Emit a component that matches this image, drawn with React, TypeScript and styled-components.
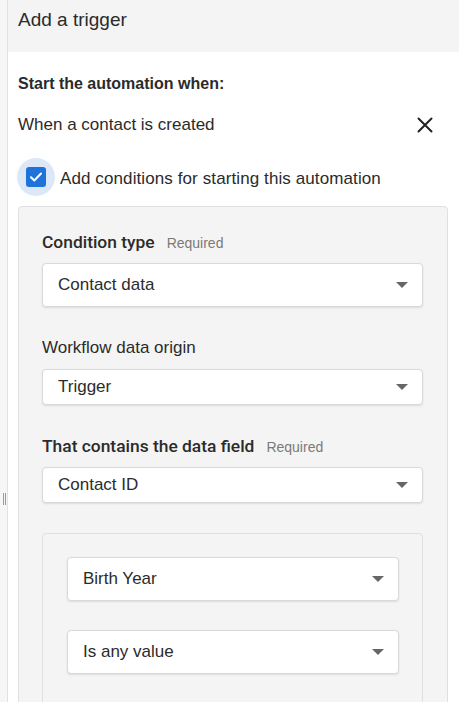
import React from 'react';
import styled, { createGlobalStyle } from 'styled-components';

const GlobalStyle = createGlobalStyle`
  *, *::before, *::after {
    box-sizing: border-box;
  }

  html, body {
    margin: 0;
    padding: 0;
    background: #ffffff;
  }

  body {
    font-family: "Liberation Sans", Arial, sans-serif;
    color: #2b2b2b;
    overflow: hidden;
  }
`;

const Page = styled.div`
  display: flex;
  height: 702px;
  overflow: hidden;
`;

const Splitter = styled.div`
  width: 8px;
  flex-shrink: 0;
  background: #f6f6f6;
  border-right: 1px solid #e2e2e2;
  padding: 493px 0 0 3px;
`;

const Grip = styled.div`
  width: 3px;
  height: 12px;
  border-left: 1px solid #9a9a9a;
  border-right: 1px solid #9a9a9a;
`;

const Panel = styled.div`
  flex: 1;
  min-width: 0;
  display: flex;
  flex-direction: column;
`;

const Header = styled.header`
  height: 52px;
  flex-shrink: 0;
  background: #f4f4f4;
  padding: 8px 10px 0;
  font-size: 19px;
  line-height: 24px;
  color: #2b2b2b;
`;

const Body = styled.div`
  display: flex;
  flex-direction: column;
  padding: 22px 11px 0 10px;
`;

const Heading = styled.div`
  font-size: 16px;
  font-weight: 700;
  line-height: 20px;
`;

const TriggerRow = styled.div`
  margin-top: 19px;
  height: 24px;
  display: flex;
  align-items: center;
  justify-content: space-between;
  font-size: 17px;
  line-height: 24px;
`;

const CloseButton = styled.button`
  width: 18px;
  height: 18px;
  margin-right: 14px;
  padding: 1px;
  border: none;
  background: none;
  cursor: pointer;
  display: flex;
  color: #222222;
`;

const CheckRow = styled.label`
  margin-top: 21px;
  margin-left: -1px;
  height: 38px;
  display: flex;
  align-items: center;
  gap: 5px;
  cursor: pointer;
`;

const Halo = styled.span`
  width: 38px;
  height: 38px;
  border-radius: 50%;
  background: #dce8f8;
  display: flex;
  align-items: center;
  justify-content: center;
`;

const CheckBox = styled.span`
  width: 20px;
  height: 20px;
  border-radius: 3px;
  background: #1f72d9;
  display: flex;
  align-items: center;
  justify-content: center;
`;

const CheckLabel = styled.span`
  font-size: 17px;
  line-height: 24px;
  letter-spacing: 0.1px;
  padding-top: 3px;
`;

const Card = styled.div<{ $nested?: boolean }>`
  margin-top: ${(p) => (p.$nested ? '30px' : '10px')};
  background: #f4f4f4;
  border: 1px solid #e0e0e0;
  border-radius: 4px;
  display: flex;
  flex-direction: column;
  padding: ${(p) => (p.$nested ? '23px 23px 40px 24px' : '25px 24px 40px 23px')};
  gap: ${(p) => (p.$nested ? '29px' : '0')};
`;

const Field = styled.div`
  display: flex;
  flex-direction: column;

  & + & {
    margin-top: 31px;
  }
`;

const LabelRow = styled.div`
  height: 20px;
  display: flex;
  align-items: baseline;
  line-height: 20px;
`;

const LabelText = styled.span<{ $strong?: boolean }>`
  font-family: ${(p) => (p.$strong ? 'Roboto, "Liberation Sans", sans-serif' : 'inherit')};
  font-size: ${(p) => (p.$strong ? '17.4px' : '17px')};
  font-weight: ${(p) => (p.$strong ? 500 : 400)};
  line-height: 20px;
  color: #2b2b2b;
`;

const Required = styled.span`
  margin-left: 12px;
  font-size: 14px;
  line-height: 20px;
  color: #7a7a7a;
`;

const Select = styled.div<{ $tall?: boolean; $spaced?: boolean }>`
  margin-top: ${(p) => (p.$spaced ? '11px' : '0')};
  height: ${(p) => (p.$tall ? '44px' : '36px')};
  background: #ffffff;
  border: 1px solid #d9d9d9;
  border-radius: 4px;
  box-shadow: 0 1px 2px rgba(0, 0, 0, 0.1);
  display: flex;
  align-items: center;
  justify-content: space-between;
  padding: 0 14px 0 15px;
  font-size: 17px;
  color: #2b2b2b;
  cursor: pointer;
`;

const Caret = styled.span`
  width: 0;
  height: 0;
  border-left: 6px solid transparent;
  border-right: 6px solid transparent;
  border-top: 6px solid #666666;
`;

const CloseIcon = () => (
  <svg width="16" height="16" viewBox="0 0 16 16" fill="none">
    <path d="M1.5 1.5 14.5 14.5M14.5 1.5 1.5 14.5" stroke="currentColor" strokeWidth="2" strokeLinecap="round" />
  </svg>
);

const CheckIcon = () => (
  <svg width="14" height="14" viewBox="0 0 14 14" fill="none">
    <path d="M2 7.3 5.3 10.5 12 3.5" stroke="#ffffff" strokeWidth="2" strokeLinecap="round" strokeLinejoin="round" />
  </svg>
);

interface DropdownProps {
  value: string;
  tall?: boolean;
  spaced?: boolean;
}

const Dropdown: React.FC<DropdownProps> = ({ value, tall, spaced }) => (
  <Select $tall={tall} $spaced={spaced}>
    <span>{value}</span>
    <Caret />
  </Select>
);

const App: React.FC = () => {
  return (
    <>
      <GlobalStyle />
      <Page>
        <Splitter>
          <Grip />
        </Splitter>
        <Panel>
          <Header>Add a trigger</Header>
          <Body>
            <Heading>Start the automation when:</Heading>
            <TriggerRow>
              <span>When a contact is created</span>
              <CloseButton type="button" aria-label="Remove trigger">
                <CloseIcon />
              </CloseButton>
            </TriggerRow>
            <CheckRow>
              <Halo>
                <CheckBox>
                  <CheckIcon />
                </CheckBox>
              </Halo>
              <CheckLabel>Add conditions for starting this automation</CheckLabel>
            </CheckRow>
            <Card>
              <Field>
                <LabelRow>
                  <LabelText $strong>Condition type</LabelText>
                  <Required>Required</Required>
                </LabelRow>
                <Dropdown value="Contact data" tall spaced />
              </Field>
              <Field>
                <LabelRow>
                  <LabelText>Workflow data origin</LabelText>
                </LabelRow>
                <Dropdown value="Trigger" spaced />
              </Field>
              <Field>
                <LabelRow>
                  <LabelText $strong>That contains the data field</LabelText>
                  <Required>Required</Required>
                </LabelRow>
                <Dropdown value="Contact ID" spaced />
              </Field>
              <Card $nested>
                <Dropdown value="Birth Year" tall />
                <Dropdown value="Is any value" tall />
              </Card>
            </Card>
          </Body>
        </Panel>
      </Page>
    </>
  );
};

export default App;
